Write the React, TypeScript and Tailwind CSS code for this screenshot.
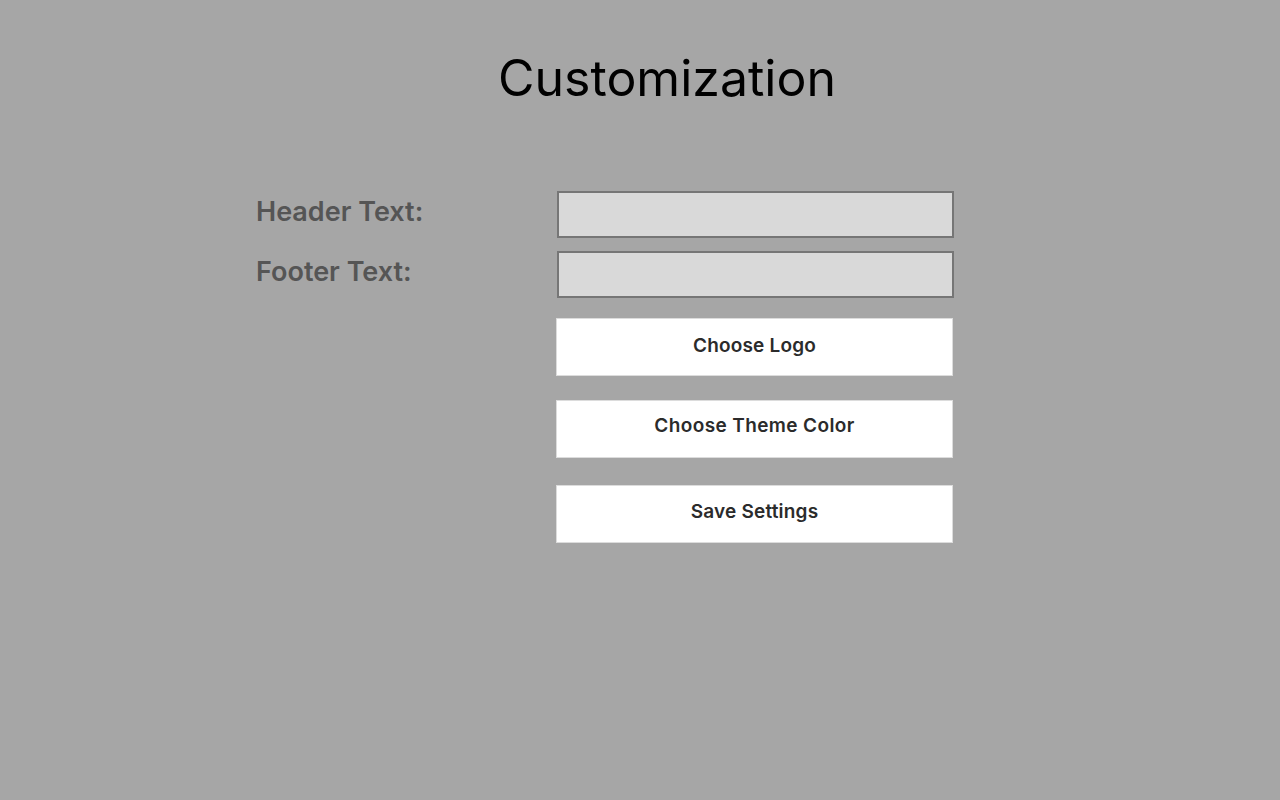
export default function App() {
  return (
    <div className="min-h-screen w-full bg-[#a6a6a6] font-['Inter',sans-serif]">
      {/* Title */}
      <div className="flex justify-center pl-[54px] pt-[45px]">
        <h1 className="text-[50px] leading-[67px] font-normal text-black">Customization</h1>
      </div>

      {/* Form */}
      <div className="ml-[256px] mt-[79px] w-[698px]">
        <div className="flex items-start">
          <label className="w-[301px] pt-[3px] text-[27px] leading-[36px] font-semibold text-[#555555]">
            Header Text:
          </label>
          <input
            type="text"
            className="h-[47px] w-[397px] border-2 border-[#767676] bg-[#d9d9d9] px-2 outline-none"
          />
        </div>
        <div className="mt-[13px] flex items-start">
          <label className="w-[301px] pt-[3px] text-[27px] leading-[36px] font-semibold text-[#555555]">
            Footer Text:
          </label>
          <input
            type="text"
            className="h-[47px] w-[397px] border-2 border-[#767676] bg-[#d9d9d9] px-2 outline-none"
          />
        </div>

        <div className="ml-[300px] flex w-[397px] flex-col">
          <button className="mt-[20px] h-[58px] border border-[#dcdcdc] bg-white pb-[1px] text-[19px] font-semibold tracking-[0.01em] text-[#2b2b2b]">
            Choose Logo
          </button>
          <button className="mt-[24px] h-[58px] border border-[#dcdcdc] bg-white pb-[5px] text-[19px] font-semibold tracking-[0.02em] text-[#2b2b2b]">
            Choose Theme Color
          </button>
          <button className="mt-[27px] h-[58px] border border-[#dcdcdc] bg-white pb-[3px] text-[19px] font-semibold tracking-[0.01em] text-[#2b2b2b]">
            Save Settings
          </button>
        </div>
      </div>
    </div>
  );
}
